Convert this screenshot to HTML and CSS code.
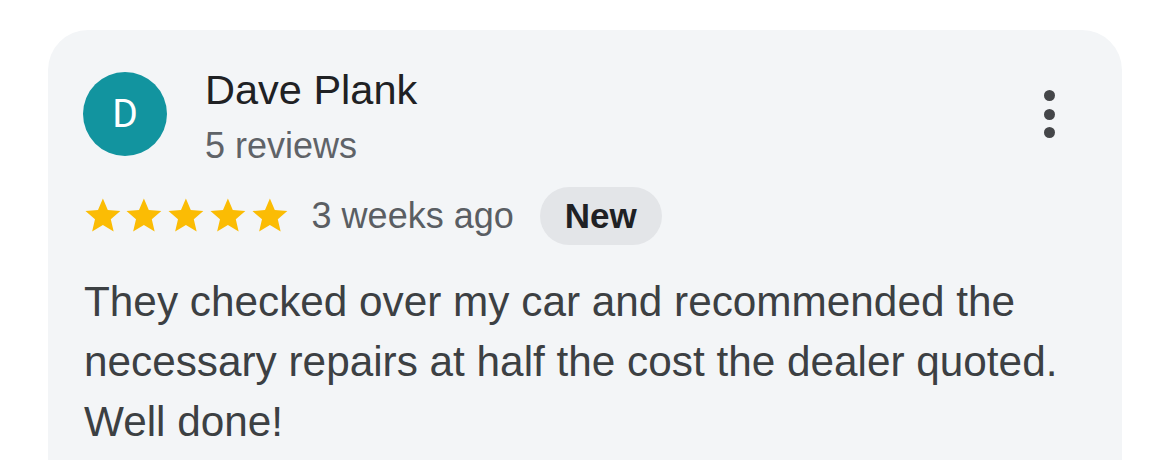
FILE: index.html
```html
<!DOCTYPE html>
<html lang="en">
<head>
<meta charset="utf-8">
<title>Review</title>
<link rel="stylesheet" href="styles.css">
</head>
<body>
<div class="card">
  <div class="header">
    <div class="avatar">D</div>
    <div class="who">
      <div class="name">Dave Plank</div>
      <div class="count">5 reviews</div>
    </div>
    <div class="more" aria-label="More options">
      <span class="dot"></span>
      <span class="dot"></span>
      <span class="dot"></span>
    </div>
  </div>
  <div class="meta">
    <div class="stars">
      <svg class="star" viewBox="0 0 24 24"><path d="M12 17.27L18.18 21l-1.64-7.03L22 9.24l-7.19-.61L12 2 9.19 8.63 2 9.240l5.46 4.73L5.82 21z"/></svg>
      <svg class="star" viewBox="0 0 24 24"><path d="M12 17.27L18.18 21l-1.64-7.03L22 9.24l-7.19-.61L12 2 9.19 8.63 2 9.24l5.46 4.73L5.82 21z"/></svg>
      <svg class="star" viewBox="0 0 24 24"><path d="M12 17.27L18.18 21l-1.64-7.03L22 9.24l-7.19-.61L12 2 9.19 8.63 2 9.24l5.46 4.73L5.82 21z"/></svg>
      <svg class="star" viewBox="0 0 24 24"><path d="M12 17.27L18.18 21l-1.64-7.03L22 9.24l-7.19-.61L12 2 9.19 8.63 2 9.24l5.46 4.73L5.82 21z"/></svg>
      <svg class="star" viewBox="0 0 24 24"><path d="M12 17.27L18.18 21l-1.64-7.03L22 9.24l-7.19-.61L12 2 9.19 8.63 2 9.24l5.46 4.73L5.82 21z"/></svg>
    </div>
    <span class="when">3 weeks ago</span>
    <span class="badge">New</span>
  </div>
  <p class="text">They checked over my car and recommended the necessary repairs at half the cost the dealer quoted. Well done!</p>
</div>
</body>
</html>
```

FILE: styles.css
```css
html, body {
  margin: 0;
  padding: 0;
  background: #ffffff;
  overflow: hidden;
  font-family: "Liberation Sans", Arial, sans-serif;
}

.card {
  margin: 30px 48px 0 48px;
  background: #f3f5f7;
  border-radius: 40px;
  padding: 36px 35px 40px 35px;
  min-height: 420px;
}

.header {
  display: flex;
  align-items: flex-start;
}

.avatar {
  width: 84px;
  height: 84px;
  margin-top: 6px;
  border-radius: 50%;
  background: #12949f;
  color: #ffffff;
  font-family: Roboto, "Liberation Sans", sans-serif;
  font-size: 39px;
  display: flex;
  align-items: center;
  justify-content: center;
  flex: none;
}

.who {
  margin-left: 38px;
  flex: 1;
}

.name {
  font-size: 41.5px;
  line-height: 48px;
  color: #202124;
}

.count {
  margin-top: 10px;
  font-size: 36px;
  line-height: 44px;
  color: #5f6368;
}

.more {
  display: flex;
  flex-direction: column;
  gap: 7.5px;
  margin-top: 24px;
  margin-right: 32px;
}

.dot {
  width: 11px;
  height: 11px;
  border-radius: 50%;
  background: #444649;
}

.meta {
  display: flex;
  align-items: center;
  margin-top: 19px;
}

.stars {
  display: flex;
  margin-left: -1.4px;
}

.star {
  width: 41.8px;
  height: 41.8px;
  fill: #fbbc04;
  display: block;
}

.when {
  margin-left: 21px;
  font-size: 36px;
  line-height: 44px;
  color: #5a5e63;
}

.badge {
  margin-left: 26px;
  height: 58px;
  padding: 0 25px;
  border-radius: 29px;
  background: #e3e5e8;
  color: #202124;
  font-weight: bold;
  font-size: 35px;
  display: flex;
  align-items: center;
}

.text {
  margin: 27px 0 0 1px;
  font-size: 42.3px;
  line-height: 60px;
  color: #3c4043;
}
```
